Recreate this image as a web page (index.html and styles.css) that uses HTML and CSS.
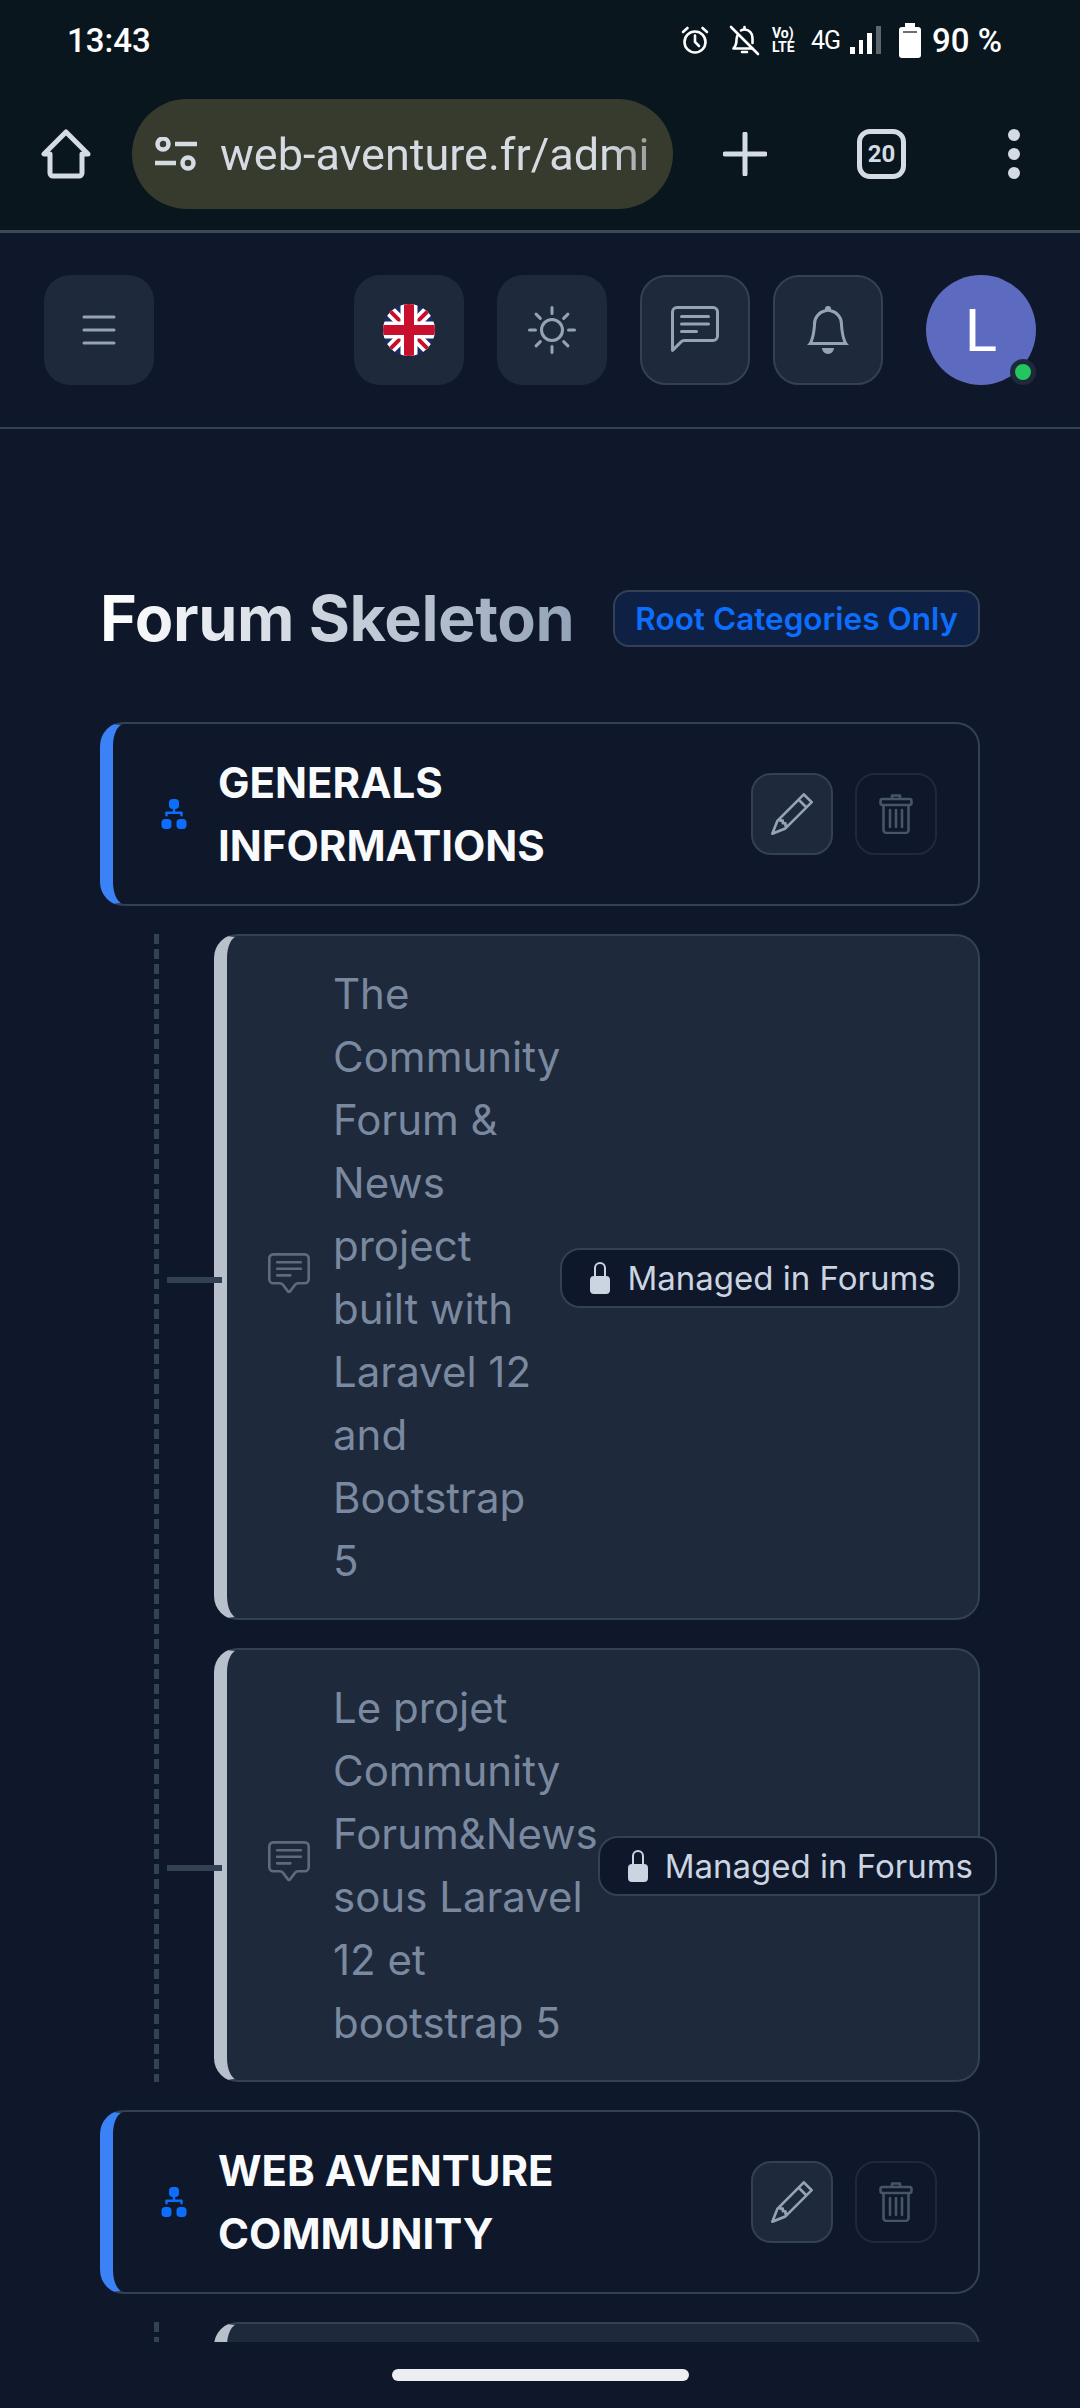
FILE: index.html
```html
<!DOCTYPE html>
<html lang="en">
<head>
    <meta charset="UTF-8">
    <meta name="viewport" content="width=device-width, initial-scale=1.0">
    <title>Forum Skeleton</title>
    <link rel="stylesheet" href="styles.css">
</head>
<body>

    <svg class="sprites" xmlns="http://www.w3.org/2000/svg">
        <symbol id="i-diagram" viewBox="0 0 16 16"><path fill="currentColor" d="M6 3.5A1.5 1.5 0 0 1 7.5 2h1A1.5 1.5 0 0 1 10 3.5v1A1.5 1.5 0 0 1 8.5 6v1H11a.5.5 0 0 1 .5.5v1a.5.5 0 0 1-1 0V8h-5v.5a.5.5 0 0 1-1 0v-1A.5.5 0 0 1 5 7h2.5V6A1.5 1.5 0 0 1 6 4.5zm-3 8A1.5 1.5 0 0 1 4.5 10h1A1.5 1.5 0 0 1 7 11.5v1A1.5 1.5 0 0 1 5.5 14h-1A1.5 1.5 0 0 1 3 12.5zm6 0a1.5 1.5 0 0 1 1.5-1.5h1a1.5 1.5 0 0 1 1.5 1.5v1a1.5 1.5 0 0 1-1.5 1.5h-1A1.5 1.5 0 0 1 9 12.5z"/></symbol>
        <symbol id="i-pencil" viewBox="0 0 16 16"><path fill="currentColor" d="M12.146.146a.5.5 0 0 1 .708 0l3 3a.5.5 0 0 1 0 .708l-10 10a.5.5 0 0 1-.168.11l-5 2a.5.5 0 0 1-.65-.65l2-5a.5.5 0 0 1 .11-.168zM11.207 2.5 13.5 4.793 14.793 3.5 12.5 1.207zm1.586 3L10.5 3.207 4 9.707V10h.5a.5.5 0 0 1 .5.5v.5h.5a.5.5 0 0 1 .5.5v.5h.293zm-9.761 5.175-.106.106-1.528 3.821 3.821-1.528.106-.106A.5.5 0 0 1 5 12.5V12h-.5a.5.5 0 0 1-.5-.5V11h-.5a.5.5 0 0 1-.468-.325"/></symbol>
        <symbol id="i-trash" viewBox="0 0 34 40"><g fill="none" stroke="currentColor" stroke-width="2.6" stroke-linecap="round" stroke-linejoin="round"><path d="M13 4.500v-3h8v3"/><rect x="1.500" y="5" width="31" height="6" rx="2"/><path d="M4.500 11v25a3 3 0 0 0 3 3h19a3 3 0 0 0 3-3V11"/><path d="M11 16v17M17 16v17M23 16v17"/></g></symbol>
        <symbol id="i-comment" viewBox="0 0 16 16"><path fill="currentColor" d="M14 1a1 1 0 0 1 1 1v8a1 1 0 0 1-1 1h-2.5a2 2 0 0 0-1.6.8L8 14.333 6.1 11.8a2 2 0 0 0-1.6-.8H2a1 1 0 0 1-1-1V2a1 1 0 0 1 1-1zM2 0a2 2 0 0 0-2 2v8a2 2 0 0 0 2 2h2.5a1 1 0 0 1 .8.4l1.9 2.533a1 1 0 0 0 1.6 0l1.9-2.533a1 1 0 0 1 .8-.4H14a2 2 0 0 0 2-2V2a2 2 0 0 0-2-2z"/><path fill="currentColor" d="M3 3.5a.5.5 0 0 1 .5-.5h9a.5.5 0 0 1 0 1h-9a.5.5 0 0 1-.5-.5M3 6a.5.5 0 0 1 .5-.5h9a.5.5 0 0 1 0 1h-9A.5.5 0 0 1 3 6m0 2.5a.5.5 0 0 1 .5-.5h5a.5.5 0 0 1 0 1h-5a.5.5 0 0 1-.5-.5"/></symbol>
        <symbol id="i-lock" viewBox="0 0 16 16"><path fill="currentColor" d="M8 1a2 2 0 0 1 2 2v4H6V3a2 2 0 0 1 2-2m3 6V3a3 3 0 0 0-6 0v4a2 2 0 0 0-2 2v5a2 2 0 0 0 2 2h6a2 2 0 0 0 2-2V9a2 2 0 0 0-2-2"/></symbol>
    </svg>

    <div class="status-bar">
        <span class="clock">13:43</span>
        <div class="status-icons">
            <svg class="st-alarm" viewBox="0 0 28 28" fill="none" stroke="currentColor" stroke-width="2.6" stroke-linecap="round"><circle cx="14" cy="16" r="10.5"/><path d="M14 9.5V16l4 4M2 6l4.5-4M26 6l-4.500-4"/></svg>
            <svg class="st-bell" viewBox="0 0 31 31" fill="none" stroke="currentColor" stroke-width="2.6" stroke-linecap="round" stroke-linejoin="round"><path d="M9 9.500c-1 1.500-1.500 3-1.500 5 0 4-1 7-3 9h19M12 5.500c1-.7 2.200-1 3.500-1 4.500 0 8 3.500 8 8.500v5"/><path d="M13 27h5M15.500 2v2M2 2l27 27"/></svg>
            <div class="st-volte"><span>Vo)</span><span>LTE</span></div>
            <span class="st-net">4G</span>
            <div class="st-signal"><i class="b1"></i><i class="b2"></i><i class="b3"></i><i class="b4"></i></div>
            <div class="st-battery"></div>
            <span class="st-pct">90 %</span>
        </div>
    </div>

    <div class="browser-bar">
        <svg class="br-home" viewBox="0 0 50 50" fill="none" stroke="currentColor" stroke-width="5" stroke-linejoin="round"><path d="M25 3 3 25h6v19a3 3 0 0 0 3 3h26a3 3 0 0 0 3-3V25h6z"/></svg>
        <div class="url-pill">
            <svg class="url-tune" viewBox="0 0 42 34" fill="none" stroke="currentColor" stroke-width="4.500"><circle cx="8" cy="7" r="5.500"/><path d="M20 7h22M0 26h21"/><circle cx="33" cy="26" r="5.500"/></svg>
            <span class="url-text">web-aventure.fr/admi</span>
        </div>
        <svg class="br-plus" viewBox="0 0 44 44" fill="none" stroke="currentColor" stroke-width="5" stroke-linecap="round"><path d="M22 2v40M2 22h40"/></svg>
        <div class="br-tabs">20</div>
        <div class="br-dots"><i></i><i></i><i></i></div>
    </div>

    <header class="app-header">
        <button class="hd-btn hd-menu">
            <svg width="34" height="30" viewBox="0 0 34 30" stroke="#94a3b8" stroke-width="3" stroke-linecap="round"><path d="M2 2h30M2 15h30M2 28h30"/></svg>
        </button>
        <button class="hd-btn hd-flag">
            <svg width="52" height="52" viewBox="0 0 52 52">
                <defs><clipPath id="flag-clip"><circle cx="26" cy="26" r="26"/></clipPath></defs>
                <g clip-path="url(#flag-clip)">
                    <rect width="52" height="52" fill="#1a2a6c"/>
                    <path d="M0 0 52 52M52 0 0 52" stroke="#fff" stroke-width="11"/>
                    <path d="M0 0 52 52M52 0 0 52" stroke="#c8102e" stroke-width="4"/>
                    <path d="M26 0v52M0 26h52" stroke="#fff" stroke-width="17"/>
                    <path d="M26 0v52M0 26h52" stroke="#c8102e" stroke-width="10"/>
                </g>
            </svg>
        </button>
        <button class="hd-btn hd-sun">
            <svg width="48" height="48" viewBox="0 0 16 16"><path fill="#94a3b8" d="M8 11a3 3 0 1 1 0-6 3 3 0 0 1 0 6m0 1a4 4 0 1 0 0-8 4 4 0 0 0 0 8M8 0a.5.5 0 0 1 .5.5v2a.5.5 0 0 1-1 0v-2A.5.5 0 0 1 8 0m0 13a.5.5 0 0 1 .5.5v2a.5.5 0 0 1-1 0v-2A.5.5 0 0 1 8 13m8-5a.5.5 0 0 1-.5.5h-2a.5.5 0 0 1 0-1h2a.5.5 0 0 1 .5.5M3 8a.5.5 0 0 1-.5.5h-2a.5.5 0 0 1 0-1h2A.5.5 0 0 1 3 8m10.657-5.657a.5.5 0 0 1 0 .707l-1.414 1.415a.5.5 0 1 1-.707-.708l1.414-1.414a.5.5 0 0 1 .707 0m-9.193 9.193a.5.5 0 0 1 0 .707L3.05 13.657a.5.5 0 0 1-.707-.707l1.414-1.414a.5.5 0 0 1 .707 0m9.193 2.121a.5.5 0 0 1-.707 0l-1.414-1.414a.5.5 0 0 1 .707-.707l1.414 1.414a.5.5 0 0 1 0 .707M4.464 4.465a.5.5 0 0 1-.707 0L2.343 3.05a.5.5 0 1 1 .707-.707l1.414 1.414a.5.5 0 0 1 0 .708"/></svg>
        </button>
        <button class="hd-btn hd-bordered hd-chat">
            <svg width="48" height="48" viewBox="0 0 16 16"><path fill="#94a3b8" d="M14 1a1 1 0 0 1 1 1v8a1 1 0 0 1-1 1H4.414A2 2 0 0 0 3 11.586l-2 2V2a1 1 0 0 1 1-1zM2 0a2 2 0 0 0-2 2v12.793a.5.5 0 0 0 .854.353l2.853-2.853A1 1 0 0 1 4.414 12H14a2 2 0 0 0 2-2V2a2 2 0 0 0-2-2z"/><path fill="#94a3b8" d="M3 3.500a.5.5 0 0 1 .5-.5h9a.5.5 0 0 1 0 1h-9a.5.5 0 0 1-.5-.5M3 6a.5.5 0 0 1 .5-.5h9a.5.5 0 0 1 0 1h-9A.5.5 0 0 1 3 6m0 2.500a.5.5 0 0 1 .5-.5h5a.5.5 0 0 1 0 1h-5a.5.5 0 0 1-.5-.5"/></svg>
        </button>
        <button class="hd-btn hd-bordered hd-bell">
            <svg width="48" height="48" viewBox="0 0 16 16"><path fill="#94a3b8" d="M8 16a2 2 0 0 0 2-2H6a2 2 0 0 0 2 2M8 1.918l-.797.161A4 4 0 0 0 4 6c0 .628-.134 2.197-.459 3.742-.16.767-.376 1.566-.663 2.258h10.244c-.287-.692-.502-1.490-.663-2.258C12.134 8.197 12 6.628 12 6a4 4 0 0 0-3.203-3.920zM14.220 12c.223.447.481.801.78 1H1c.299-.199.557-.553.78-1C2.680 10.200 3 6.880 3 6c0-2.420 1.720-4.440 4.005-4.901a1 1 0 1 1 1.990 0A5 5 0 0 1 13 6c0 .880.320 4.200 1.220 6"/></svg>
        </button>
        <div class="avatar">L<span class="online-dot"></span></div>
    </header>

    <main class="page">
        <div class="title-row">
            <h1 class="page-title">Forum Skeleton</h1>
            <span class="scope-badge">Root Categories Only</span>
        </div>

        <div class="cat-card">
            <svg class="cat-icon"><use href="#i-diagram"/></svg>
            <div class="cat-name">GENERALS INFORMATIONS</div>
            <button class="act-btn act-edit"><svg><use href="#i-pencil"/></svg></button>
            <button class="act-btn act-del"><svg><use href="#i-trash"/></svg></button>
        </div>

        <div class="tree">
            <div class="forum-card">
                <svg class="forum-icon"><use href="#i-comment"/></svg>
                <div class="forum-name">The Community Forum &amp; News project built with Laravel 12 and Bootstrap 5</div>
                <span class="managed"><svg><use href="#i-lock"/></svg>Managed in Forums</span>
            </div>
            <div class="forum-card">
                <svg class="forum-icon"><use href="#i-comment"/></svg>
                <div class="forum-name">Le projet Community Forum&amp;News sous Laravel 12 et bootstrap 5</div>
                <span class="managed"><svg><use href="#i-lock"/></svg>Managed in Forums</span>
            </div>
        </div>

        <div class="cat-card">
            <svg class="cat-icon"><use href="#i-diagram"/></svg>
            <div class="cat-name">WEB AVENTURE COMMUNITY</div>
            <button class="act-btn act-edit"><svg><use href="#i-pencil"/></svg></button>
            <button class="act-btn act-del"><svg><use href="#i-trash"/></svg></button>
        </div>

        <div class="tree">
            <div class="forum-card forum-stub"></div>
        </div>
    </main>

    <div class="gesture-bar"><div class="gesture-pill"></div></div>

</body>
</html>
```

FILE: styles.css
```css
* { box-sizing: border-box; }
html, body { margin: 0; height: 100%; }
body { width: 1080px; height: 2408px; display: flex; flex-direction: column; overflow: hidden; background: #0f172a; font-family: Inter, "Noto Sans", sans-serif; color: #e2e8f0; }
button { padding: 0; font: inherit; cursor: pointer; display: flex; align-items: center; justify-content: center; }
.sprites { width: 0; height: 0; position: absolute; }

/* phone status bar */
.status-bar { height: 80px; flex: none; padding: 0 78px 0 67px; display: flex; align-items: center; justify-content: space-between; background: #0a161e; color: #fff; font-family: Roboto, sans-serif; }
.clock { font-size: 33px; font-weight: 500; }
.status-icons { display: flex; align-items: center; }
.st-alarm { width: 28px; height: 28px; margin-right: 20px; }
.st-bell { width: 31px; height: 31px; margin-right: 12px; }
.st-volte { width: 26px; display: flex; flex-direction: column; font-size: 14px; font-weight: 700; line-height: 14px; }
.st-net { width: 29px; margin-left: 13px; font-size: 25px; letter-spacing: -1px; white-space: nowrap; }
.st-signal { width: 31px; height: 28px; margin-left: 10px; display: flex; align-items: flex-end; gap: 4px; }
.st-signal i { width: 5px; background: #fff; }
.st-signal .b1 { height: 7px; }
.st-signal .b2 { height: 14px; }
.st-signal .b3 { height: 21px; }
.st-signal .b4 { height: 28px; background: #5c666d; }
.st-battery { width: 22px; height: 31px; margin: 4px 0 0 18px; position: relative; background: #fff; border-radius: 3px; }
.st-battery::before { content: ""; position: absolute; left: 6px; top: -4px; width: 10px; height: 4px; background: #fff; }
.st-battery::after { content: ""; position: absolute; left: 4px; top: 4px; width: 14px; height: 2px; background: #6b7277; }
.st-pct { margin-left: 11px; font-size: 33px; font-weight: 500; }

/* browser toolbar */
.browser-bar { height: 153px; flex: none; padding: 0 0 2px 41px; display: flex; align-items: center; background: #0a161e; border-bottom: 3px solid #3b4954; color: #d5dbe3; }
.br-home { width: 50px; height: 50px; flex: none; }
.url-pill { width: 541px; height: 110px; flex: none; margin-left: 41px; padding-left: 23px; display: flex; align-items: center; background: #373b2d; border-radius: 55px; overflow: hidden; }
.url-tune { width: 42px; height: 34px; flex: none; }
.url-text { flex: none; margin-left: 23px; font-family: Roboto, sans-serif; font-size: 45px; white-space: nowrap; -webkit-mask-image: linear-gradient(90deg, #000 90%, rgba(0,0,0,.6)); mask-image: linear-gradient(90deg, #000 90%, rgba(0,0,0,.6)); }
.br-plus { width: 44px; height: 44px; flex: none; margin-left: 50px; }
.br-tabs { width: 49px; height: 50px; flex: none; margin-left: 90px; display: flex; align-items: center; justify-content: center; border: 5px solid currentColor; border-radius: 13px; font-family: Roboto, sans-serif; font-size: 24px; font-weight: 700; }
.br-dots { flex: none; margin-left: 102px; display: flex; flex-direction: column; gap: 7px; }
.br-dots i { width: 12px; height: 12px; background: currentColor; border-radius: 50%; }

/* app header */
.app-header { height: 196px; flex: none; padding: 0 44px; display: flex; align-items: center; border-bottom: 2px solid #334155; }
.hd-btn { width: 110px; height: 110px; flex: none; background: #1e293b; border: none; border-radius: 26px; }
.hd-bordered { border: 2px solid #334155; }
.hd-flag { margin-left: auto; }
.hd-sun, .hd-chat { margin-left: 33px; }
.hd-bell { margin-left: 23px; }
.avatar { width: 110px; height: 110px; flex: none; margin-left: 43px; position: relative; display: flex; align-items: center; justify-content: center; background: #5c6bc0; border-radius: 50%; color: #fff; font-family: Roboto, sans-serif; font-size: 60px; }
.online-dot { position: absolute; right: 0; bottom: 0; width: 26px; height: 26px; background: #22c55e; border: 5px solid #1e293b; border-radius: 50%; }

/* page content */
.page { flex: 1; min-height: 0; padding: 151px 100px 0; overflow: hidden; }
.title-row { display: flex; align-items: center; justify-content: space-between; margin-bottom: 66px; }
.page-title { margin: 0; font-size: 63px; line-height: 76px; font-weight: 700; letter-spacing: -0.4px; white-space: nowrap; background: linear-gradient(90deg, #fff, #94a3b8); -webkit-background-clip: text; background-clip: text; color: transparent; }
.scope-badge { padding: 0 20px; height: 57px; display: flex; align-items: center; background: #0e2145; border: 2px solid #334155; border-radius: 16px; color: #0d6efd; font-size: 31.5px; font-weight: 600; white-space: nowrap; }

.cat-card { display: flex; align-items: center; padding: 27px 41px; margin-bottom: 28px; background: #0f172a; border: 2px solid #334155; border-left: 13px solid #3b82f6; border-radius: 24px; }
.cat-icon { width: 40px; height: 40px; flex: none; color: #0d6efd; }
.cat-name { flex: 1; margin-left: 24px; font-size: 42px; line-height: 63px; font-weight: 700; color: #f8fafc; }
.act-btn { width: 82px; height: 82px; flex: none; border-radius: 20px; }
.act-edit svg { width: 42px; height: 42px; }
.act-del svg { width: 34px; height: 40px; }
.act-edit { background: #1e293b; border: 2px solid #334155; color: #94a3b8; }
.act-del { margin-left: 22px; background: transparent; border: 2px solid #1e293b; color: #475569; }

/* dashed line on the left of the children */
.tree { padding-left: 114px; margin-bottom: 28px; display: flex; flex-direction: column; gap: 28px; background: repeating-linear-gradient(#334155 0 10px, transparent 10px 15px) no-repeat 54px 0 / 5px 100%; }
.forum-card { position: relative; display: flex; align-items: center; padding: 26px 21px 26px 41px; background: #1e293b; border: 2px solid #334155; border-left: 13px solid #b8c0cb; border-radius: 24px; }
.forum-card::before { content: ""; position: absolute; left: -60px; top: 50%; width: 55px; height: 6px; background: #334155; }
.forum-stub { height: 200px; }
.forum-stub::before { display: none; }
.forum-icon { width: 42px; height: 42px; flex: none; margin-top: -6px; color: #5f6b7c; }
.forum-name { flex: 1; margin-left: 23px; font-size: 42px; line-height: 63px; color: #7a899f; }
.managed { flex: none; height: 60px; padding: 0 22px; margin-top: 2px; display: flex; align-items: center; gap: 11px; background: #0f172a; border: 2px solid #334155; border-radius: 20px; color: #cbd5e1; font-size: 33px; white-space: nowrap; }
.managed svg { width: 32px; height: 32px; flex: none; }

/* gesture bar */
.gesture-bar { height: 66px; flex: none; display: flex; justify-content: center; padding-top: 27px; background: #0f172a; }
.gesture-pill { width: 297px; height: 12px; background: #eceef1; border-radius: 6px; }
```
